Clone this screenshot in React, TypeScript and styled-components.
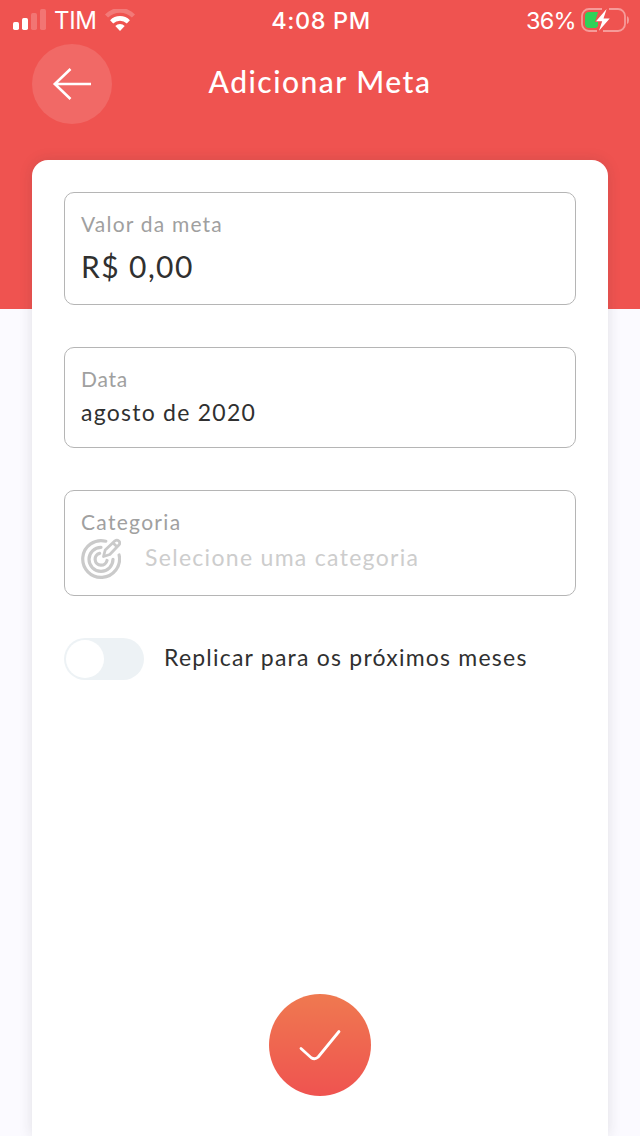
import React from 'react';
import styled, { createGlobalStyle } from 'styled-components';

const GlobalStyle = createGlobalStyle`
  * { box-sizing: border-box; }
  body { margin: 0; background: #fbfaff; }
`;

const Screen = styled.div`
  width: 640px;
  height: 1136px;
  overflow: hidden;
  display: flex;
  flex-direction: column;
  font-family: Lato, 'Liberation Sans', sans-serif;
  background: linear-gradient(#ef5350 0 309px, #fbfaff 309px);
`;

const StatusBar = styled.div`
  height: 40px;
  flex: none;
  display: grid;
  grid-template-columns: 1fr auto 1fr;
  align-items: center;
  padding: 0 11px 0 13px;
  font-family: Inter, 'Liberation Sans', sans-serif;
  color: #fff;
`;

const StatusGroup = styled.div<{ $end?: boolean }>`
  display: flex;
  align-items: center;
  justify-content: ${p => (p.$end ? 'flex-end' : 'flex-start')};
`;

const StatusText = styled.span<{ $weight?: number; $spacing?: number; $size?: number; $left?: number }>`
  height: 40px;
  margin-left: ${p => p.$left ?? 0}px;
  font-size: ${p => p.$size ?? 24}px;
  line-height: 42px;
  font-weight: ${p => p.$weight ?? 400};
  letter-spacing: ${p => p.$spacing ?? 0}px;
  white-space: nowrap;
`;

const Icon = styled.svg<{ $left?: number }>`
  display: block;
  flex: none;
  margin-left: ${p => p.$left ?? 0}px;
`;

const Header = styled.header`
  height: 120px;
  flex: none;
  display: grid;
  grid-template-columns: 80px 1fr 80px;
  padding: 4px 32px 0;
`;

const BackButton = styled.button`
  width: 80px;
  height: 80px;
  padding: 0;
  border: 0;
  border-radius: 50%;
  background: #f16966;
  display: grid;
  place-items: center;
`;

const Title = styled.h1`
  margin: 0;
  text-align: center;
  color: #fff;
  font-size: 30px;
  font-weight: 500;
  line-height: 75px;
  letter-spacing: 1.5px;
  white-space: nowrap;
`;

const Card = styled.main`
  flex: 1;
  margin: 0 32px;
  padding: 32px 32px 40px;
  display: flex;
  flex-direction: column;
  background: #fff;
  border-radius: 16px 16px 0 0;
  box-shadow: 0 0 14px rgba(40, 40, 50, 0.13);
`;

const Field = styled.section<{ $height: number }>`
  height: ${p => p.$height}px;
  flex: none;
  margin-bottom: 42px;
  padding: 17px 16px 0;
  border: 1px solid #b5b5b5;
  border-radius: 10px;
`;

const Label = styled.div<{ $spacing: number }>`
  font-size: 21px;
  line-height: 28px;
  color: #a0a0a0;
  letter-spacing: ${p => p.$spacing}px;
`;

const Value = styled.div<{ $size: number; $line: number; $spacing: number; $muted?: boolean }>`
  font-size: ${p => p.$size}px;
  line-height: ${p => p.$line}px;
  letter-spacing: ${p => p.$spacing}px;
  color: ${p => (p.$muted ? '#cdcdcd' : '#303030')};
  white-space: nowrap;
`;

const CategoryRow = styled.div`
  display: flex;
  gap: 24px;
  padding-top: 2px;
`;

const ToggleRow = styled.label`
  display: flex;
  gap: 20px;
`;

const Toggle = styled.span`
  width: 80px;
  height: 42px;
  padding: 2px;
  border-radius: 21px;
  background: #edf2f5;
`;

const Knob = styled.span`
  display: block;
  width: 38px;
  height: 38px;
  border-radius: 50%;
  background: #fff;
`;

const ConfirmButton = styled.button`
  width: 102px;
  height: 102px;
  margin: auto auto 0;
  padding: 0;
  border: 0;
  border-radius: 50%;
  background: linear-gradient(#ef7950, #ef5350);
  display: grid;
  place-items: center;
`;

export default function App() {
  return (
    <Screen>
      <GlobalStyle />
      <StatusBar>
        <StatusGroup>
          <Icon width="34" height="22" viewBox="0 0 34 22" fill="#fff">
            <rect x="0" y="13" width="6" height="8" rx="1.7" />
            <rect x="9" y="9" width="6" height="12" rx="1.7" />
            <rect x="18" y="4" width="6" height="17" rx="1.7" opacity=".2" />
            <rect x="27" y="0" width="6" height="21" rx="1.7" opacity=".2" />
          </Icon>
          <StatusText $spacing={-0.3} $left={7}>TIM</StatusText>
          <Icon $left={8.5} width="30" height="22" viewBox="0 0 30 22">
            <path d="M0 5.4 A21 21 0 0 1 30 5.4 L26.9 8.6 A17 17 0 0 0 3.1 8.6 Z" fill="#fff" opacity=".23" />
            <path d="M5.1 11.2 A14 14 0 0 1 24.9 11.2 L21.8 14.6 A9.7 9.7 0 0 0 8.2 14.6 Z" fill="#fff" />
            <path d="M10.3 17 A6.7 6.7 0 0 1 19.7 17 L15 22 Z" fill="#fff" />
          </Icon>
        </StatusGroup>
        <StatusText $weight={500} $spacing={0.6} $size={23.5}>4:08 PM</StatusText>
        <StatusGroup $end>
          <StatusText $spacing={-0.7} $size={23.5}>36%</StatusText>
          <Icon $left={5} width="48" height="24" viewBox="0 0 48 24">
            <path d="M21 1H8a7 7 0 0 0-7 7v8a7 7 0 0 0 7 7h8M28 1h9a7 7 0 0 1 7 7v8a7 7 0 0 1-7 7H22" fill="none" stroke="#fff" strokeWidth="1.8" opacity=".42" />
            <path d="M46 8q2 1 2 4t-2 4z" fill="#fff" opacity=".42" />
            <path d="M8 4h9l-3 10h3v4l-2 2H8q-4 0-4-4V8q0-4 4-4z" fill="#30d158" />
            <path d="M25.6 1 15 13.2h6.2L18 22.8 28.7 10.4h-6.2z" fill="#fff" />
          </Icon>
        </StatusGroup>
      </StatusBar>
      <Header>
        <BackButton aria-label="Voltar">
          <Icon width="40" height="34" viewBox="0 0 40 34" fill="none" stroke="#fff" strokeWidth="2.6">
            <path d="M39 17H2.5M18.5 2 2.8 17l15.7 15" />
          </Icon>
        </BackButton>
        <Title>Adicionar Meta</Title>
      </Header>
      <Card>
        <Field $height={113}>
          <Label $spacing={1.2}>Valor da meta</Label>
          <Value $size={30} $line={56} $spacing={1.4}>R$ 0,00</Value>
        </Field>
        <Field $height={101}>
          <Label $spacing={0.7}>Data</Label>
          <Value $size={23} $line={38} $spacing={1.25}>agosto de 2020</Value>
        </Field>
        <Field $height={106}>
          <Label $spacing={1.3}>Categoria</Label>
          <CategoryRow>
            <Icon width="40" height="42" viewBox="0 0 40 42" fill="none" stroke="#cacaca" strokeWidth="3.2" strokeLinecap="round">
              <path d="M24.8 3.2A18.4 18.4 0 1 0 38.1 17M20 9.3A12 12 0 1 0 32 21.3M18.6 15.4A6 6 0 1 0 26 22.5" />
              <path d="M22.5 18.5 24.2 12 34 2.8q2-1.5 3.8.2t.3 3.7L28.8 16.5zM31.8 4.8l4.2 4" strokeWidth="2.8" strokeLinejoin="round" />
            </Icon>
            <Value $size={23} $line={38} $spacing={1.3} $muted>Selecione uma categoria</Value>
          </CategoryRow>
        </Field>
        <ToggleRow>
          <Toggle><Knob /></Toggle>
          <Value $size={23} $line={38} $spacing={1.22}>Replicar para os próximos meses</Value>
        </ToggleRow>
        <ConfirmButton aria-label="Confirmar">
          <Icon width="42" height="34" viewBox="0 0 42 34" fill="none" stroke="#fff" strokeWidth="2.8" strokeLinecap="round">
            <path d="M2 20.5 12.2 29.7Q16 32 19.2 29L40 3.5" />
          </Icon>
        </ConfirmButton>
      </Card>
    </Screen>
  );
}
